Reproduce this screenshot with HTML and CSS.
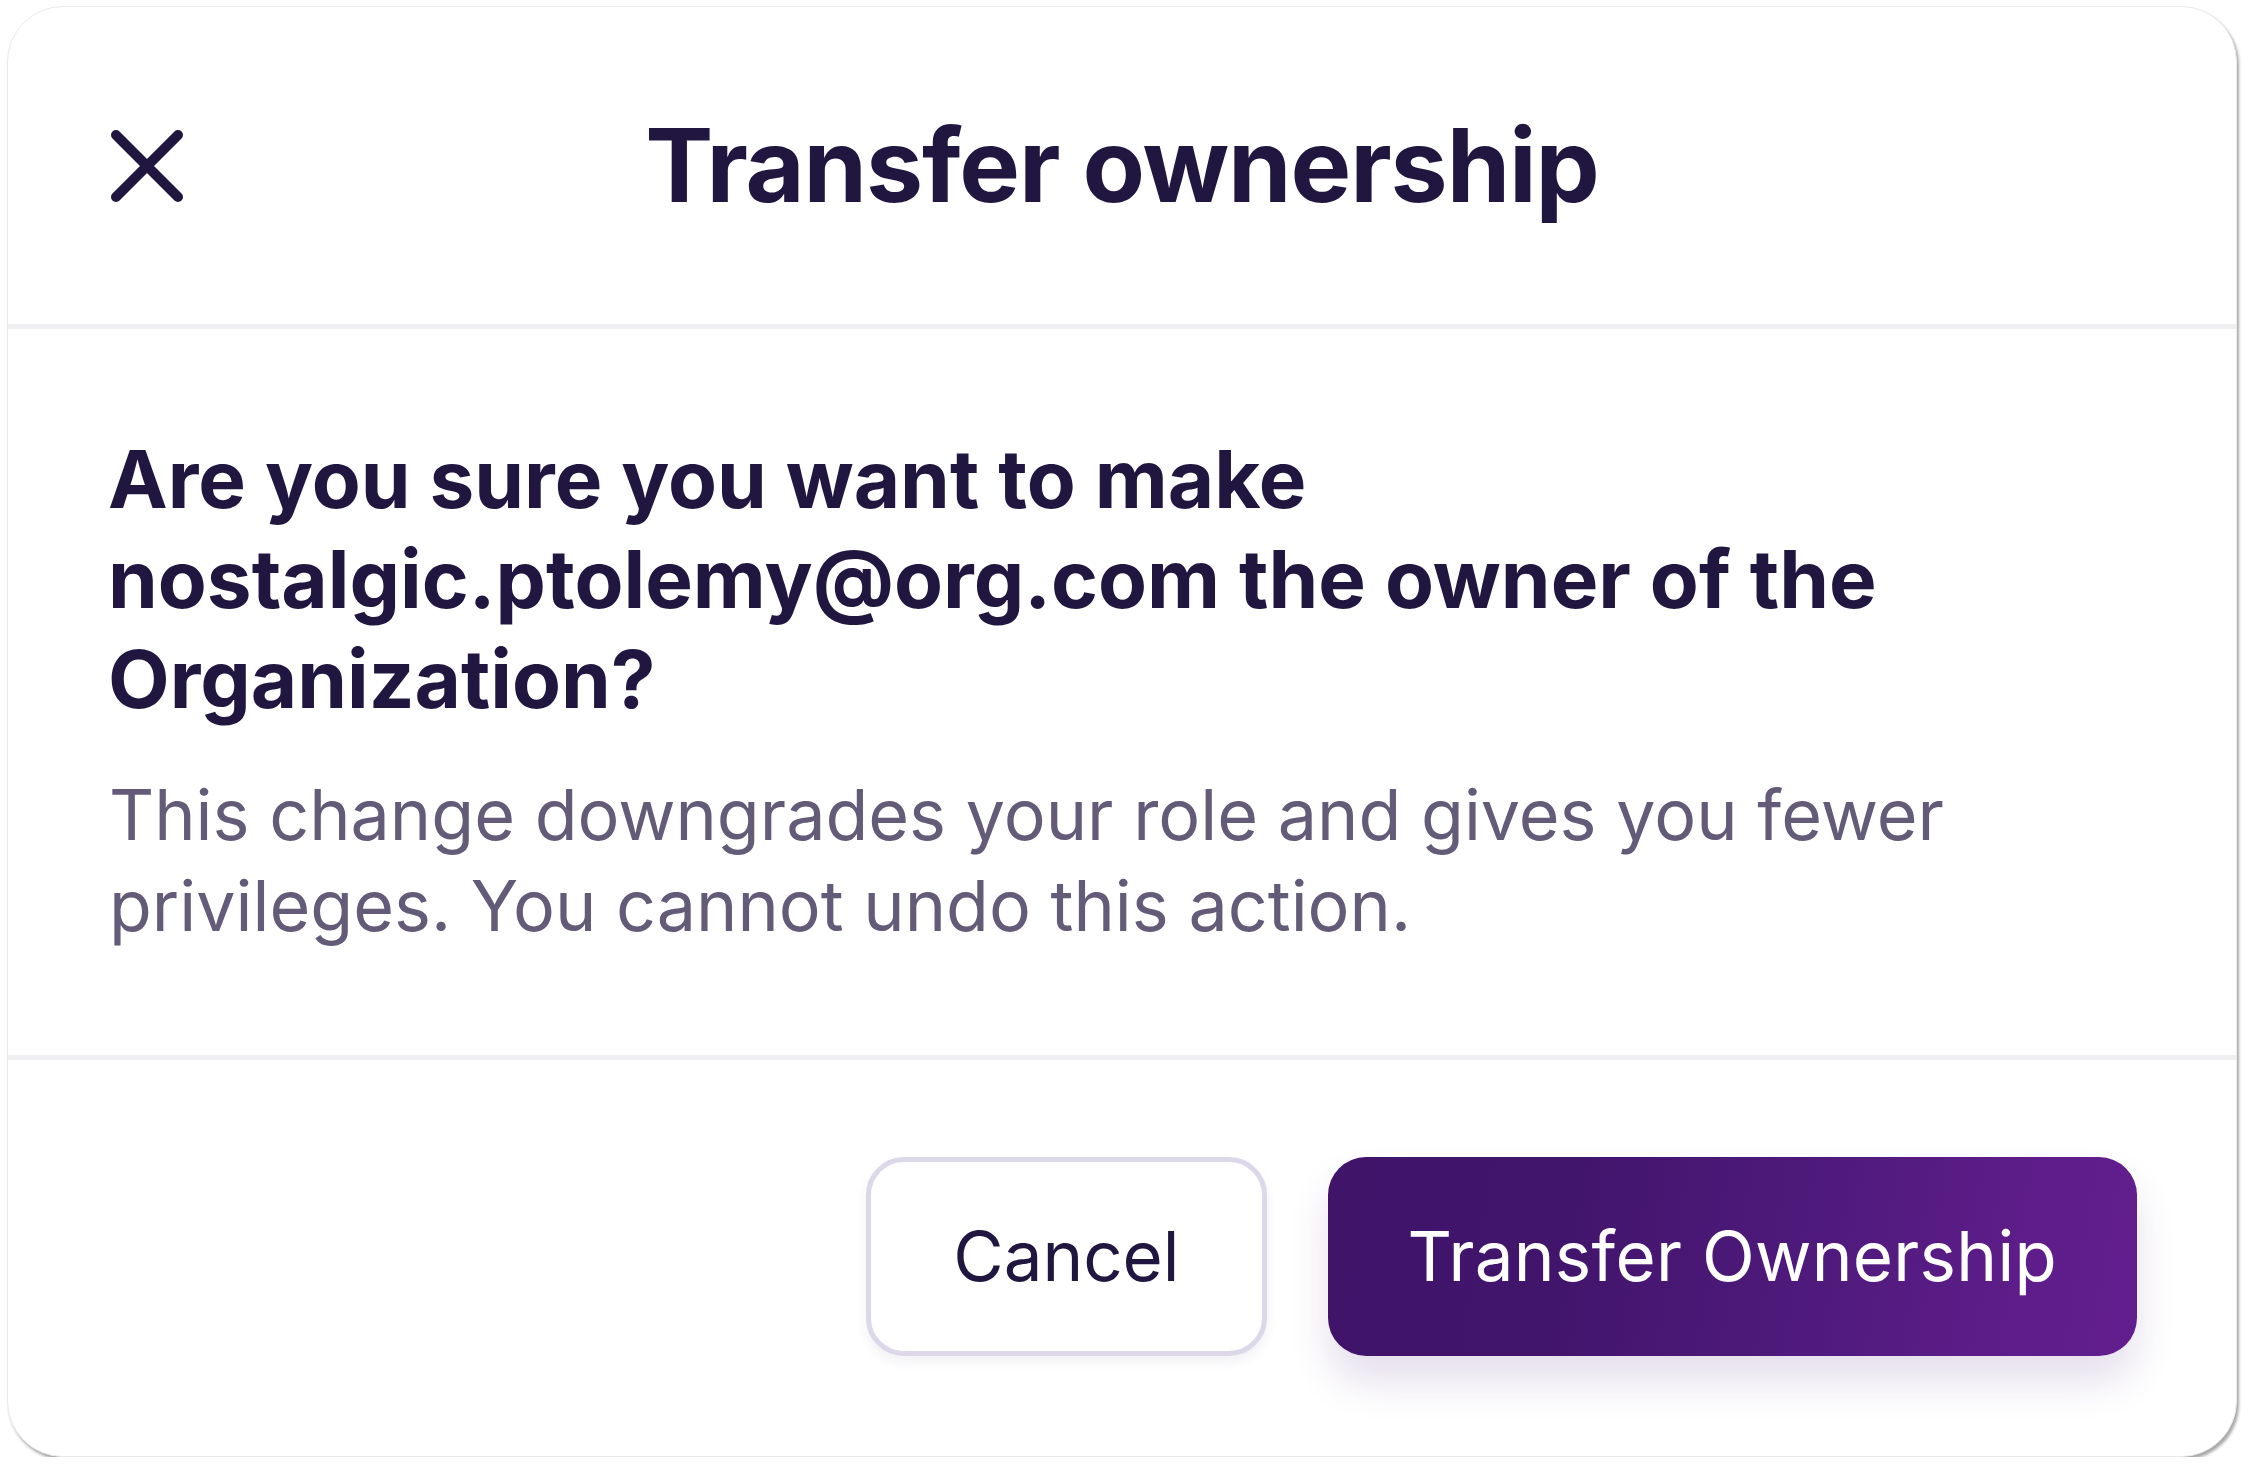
FILE: index.html
```html
<!DOCTYPE html>
<html lang="en">
<head>
<meta charset="utf-8">
<title>Transfer ownership</title>
<link rel="stylesheet" href="styles.css">
</head>
<body>
<div class="page">
  <div class="dialog">
    <div class="dialog-header">
      <button class="close-btn" aria-label="Close">
        <svg width="72" height="72" viewBox="0 0 72 72" fill="none">
          <path d="M5 5L67 67M67 5L5 67" stroke="#201640" stroke-width="10" stroke-linecap="round"/>
        </svg>
      </button>
      <h1 class="dialog-title">Transfer ownership</h1>
      <div class="spacer"></div>
    </div>
    <div class="dialog-body">
      <h2 class="question">Are you sure you want to make nostalgic.ptolemy@org.com the owner of the Organization?</h2>
      <p class="note">This change downgrades your role and gives you fewer privileges. You cannot undo this action.</p>
    </div>
    <div class="dialog-footer">
      <button class="btn btn-secondary">Cancel</button>
      <button class="btn btn-primary">Transfer Ownership</button>
    </div>
  </div>
</div>
</body>
</html>
```

FILE: styles.css
```css
* { box-sizing: border-box; }

html, body {
  margin: 0;
  padding: 0;
  background: #ffffff;
}

body {
  font-family: Inter, "Noto Sans", "Liberation Sans", sans-serif;
  color: #201640;
}

.page {
  padding: 6px 0 0 7px;
}

.dialog {
  width: 2230px;
  background: #ffffff;
  border-radius: 56px;
  border: 1px solid #ebebeb;
  box-shadow: 2px 3px 3px rgba(0, 0, 0, 0.34);
  overflow: hidden;
}

.dialog-header {
  height: 322px;
  display: grid;
  grid-template-columns: 1fr auto 1fr;
  align-items: center;
  padding: 0 103px;
  border-bottom: 5px solid #efeef1;
}

.close-btn {
  width: 72px;
  height: 72px;
  padding: 0;
  margin: 0;
  border: 0;
  background: transparent;
  display: flex;
  justify-self: start;
}

.close-btn svg { display: block; }

.dialog-title {
  margin: 0;
  font-size: 102px;
  font-weight: 700;
  line-height: 1.2;
  color: #201640;
  letter-spacing: -1.1px;
}

.dialog-body {
  padding: 100px 100px 104px;
  border-bottom: 5px solid #efeef1;
}

.question {
  margin: 0;
  font-size: 80px;
  font-weight: 700;
  line-height: 100px;
  color: #201640;
}

.note {
  margin: 40px 0 0;
  padding-left: 1px;
  font-size: 70px;
  font-weight: 400;
  line-height: 91px;
  color: #635b78;
}

.dialog-footer {
  display: flex;
  justify-content: flex-end;
  gap: 61px;
  padding: 97px 99px 100px;
}

.btn {
  height: 199px;
  display: inline-flex;
  align-items: center;
  justify-content: center;
  font-family: Inter, "Noto Sans", "Liberation Sans", sans-serif;
  font-size: 69px;
  font-weight: 400;
  line-height: 1.2;
  border-radius: 38px;
  margin: 0;
}

.btn-secondary {
  padding: 0 82px;
  background: #ffffff;
  color: #201640;
  border: 5px solid #dcd7e9;
  box-shadow: 0 6px 12px rgba(60, 40, 100, 0.07);
}

.btn-primary {
  padding: 0 80px;
  color: #ffffff;
  border: 0;
  letter-spacing: 0.3px;
  background: linear-gradient(100deg, #3f1469 0%, #42156c 30%, #4f1a7c 60%, #5e1d8a 85%, #621e8e 100%);
  box-shadow: 0 26px 40px rgba(70, 30, 110, 0.14);
}
```
